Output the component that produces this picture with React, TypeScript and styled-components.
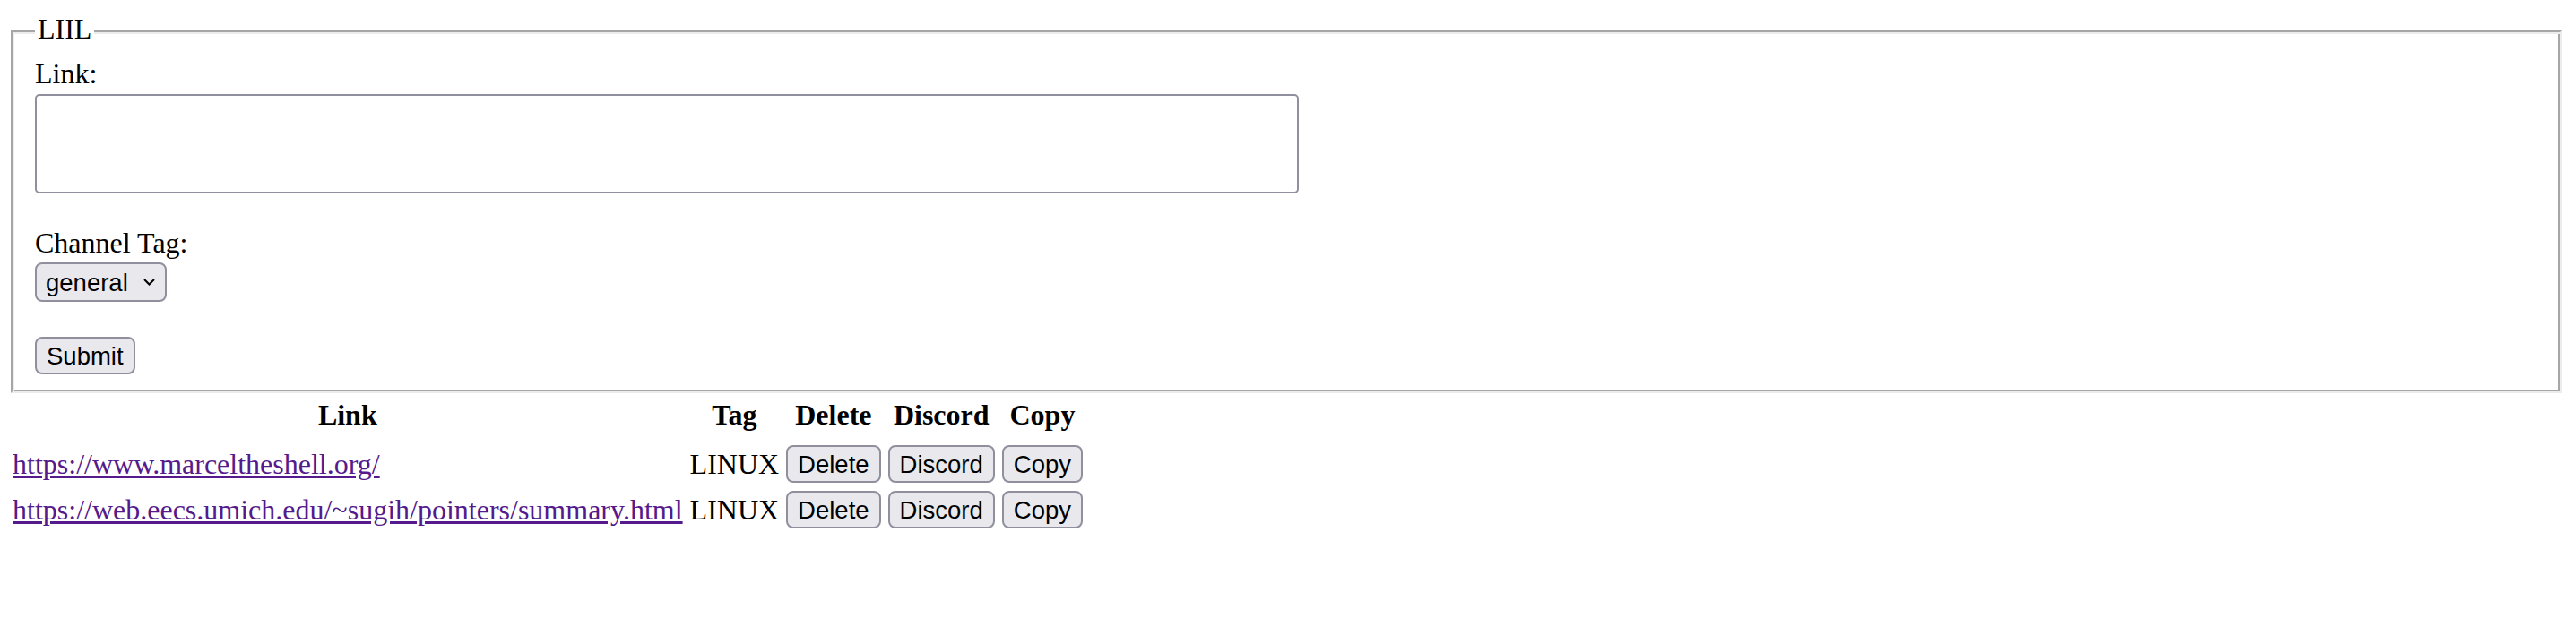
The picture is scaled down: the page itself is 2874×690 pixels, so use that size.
import React from "react";
import styled, { createGlobalStyle } from "styled-components";

const Global = createGlobalStyle`
  html, body { margin: 0; padding: 0; background: #ffffff; }
  body { font-family: "Liberation Serif", "Times New Roman", serif; color: #000; }
`;

const Page = styled.div`
  padding: 14px 12px 0 8px;
`;

const Fieldset = styled.fieldset`
  margin: 0 4px;
  padding: 8px 24px 19px 25px;
  border-style: solid;
  border-width: 2px;
  border-color: #a6a6a6 #ececec #ececec #a6a6a6;
  box-shadow: inset 2px 2px 0 #ececec, inset -2px -2px 0 #a6a6a6;
  min-width: 0;
`;

const Legend = styled.legend`
  padding: 0 3px 6px 3px;
  font-size: 32px;
  line-height: 36px;
  background: linear-gradient(#fff 0, #fff 100%) top / 100% 24px no-repeat;
`;

const Column = styled.div`
  display: flex;
  flex-direction: column;
  align-items: flex-start;
`;

const Label = styled.label<{ $gap?: number }>`
  display: block;
  font-size: 32px;
  line-height: 36px;
  margin-top: ${(p) => p.$gap ?? 0}px;
`;

const TextArea = styled.textarea`
  display: block;
  box-sizing: border-box;
  margin: 5px 0 0 0;
  width: 1410px;
  height: 111px;
  border: 2px solid #8f8f9d;
  border-radius: 5px;
  background: #fff;
  resize: none;
  outline: none;
`;

const SelectWrap = styled.div`
  position: relative;
  margin-top: 4px;
  display: inline-block;
`;

const Select = styled.select`
  appearance: none;
  -webkit-appearance: none;
  box-sizing: border-box;
  width: 147px;
  height: 44px;
  padding: 0 0 0 10px;
  border: 2px solid #8f8f9d;
  border-radius: 8px;
  background: #e9e9ed;
  color: #000;
  font-family: "Liberation Sans", Arial, sans-serif;
  font-size: 27.5px;
  outline: none;
`;

const Chevron = styled.svg`
  position: absolute;
  left: 121px;
  top: 18px;
  pointer-events: none;
`;

const Button = styled.button<{ $gap?: number }>`
  box-sizing: border-box;
  height: 42px;
  margin: ${(p) => p.$gap ?? 0}px 0 0 0;
  padding: 0 11px;
  border: 2px solid #8f8f9d;
  border-radius: 8px;
  background: #e9e9ed;
  color: #000;
  font-family: "Liberation Sans", Arial, sans-serif;
  font-size: 27.5px;
  line-height: 31px;
  cursor: default;
`;

const Table = styled.table`
  border-collapse: separate;
  border-spacing: 4px;
  font-size: 32px;
  line-height: 36px;
`;

const Th = styled.th`
  padding: 2px 2px 10px 2px;
  font-weight: bold;
  text-align: center;
`;

const Td = styled.td`
  padding: 2px 2px 3px 2px;
  vertical-align: middle;
`;

const Link = styled.a`
  color: #551a8b;
  text-decoration: underline;
`;

const rows = [
  { url: "https://www.marceltheshell.org/", tag: "LINUX" },
  { url: "https://web.eecs.umich.edu/~sugih/pointers/summary.html", tag: "LINUX" },
];

export default function App() {
  return (
    <>
      <Global />
      <Page>
        <Fieldset>
          <Legend>LIIL</Legend>
          <Column>
            <Label htmlFor="link">Link:</Label>
            <TextArea id="link" />
            <Label htmlFor="tag" $gap={37}>Channel Tag:</Label>
            <SelectWrap>
              <Select id="tag" defaultValue="general">
                <option value="general">general</option>
              </Select>
              <Chevron width="13" height="8" viewBox="0 0 13 8">
                <polyline points="1,1 6.5,6.5 12,1" fill="none" stroke="#000" strokeWidth="2" />
              </Chevron>
            </SelectWrap>
            <Button $gap={39}>Submit</Button>
          </Column>
        </Fieldset>
        <Table>
          <thead>
            <tr>
              <Th>Link</Th>
              <Th>Tag</Th>
              <Th>Delete</Th>
              <Th>Discord</Th>
              <Th>Copy</Th>
            </tr>
          </thead>
          <tbody>
            {rows.map((r) => (
              <tr key={r.url}>
                <Td>
                  <Link href="#" onClick={(e) => e.preventDefault()}>{r.url}</Link>
                </Td>
                <Td>{r.tag}</Td>
                <Td><Button>Delete</Button></Td>
                <Td><Button>Discord</Button></Td>
                <Td><Button>Copy</Button></Td>
              </tr>
            ))}
          </tbody>
        </Table>
      </Page>
    </>
  );
}
